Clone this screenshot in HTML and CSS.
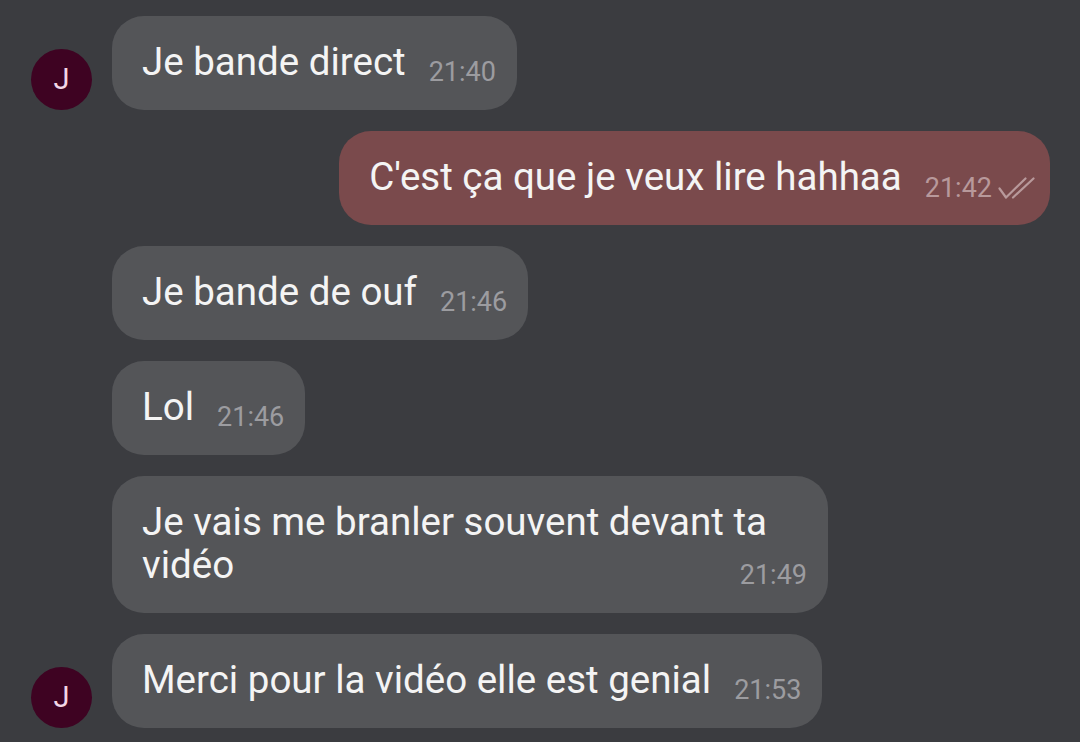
FILE: index.html
```html
<!DOCTYPE html>
<html lang="fr">
<head>
<meta charset="utf-8">
<title>Chat</title>
<link rel="stylesheet" href="styles.css">
</head>
<body>
<div class="chat">
  <div class="row in">
    <div class="avatar">J</div>
    <div class="bubble"><span class="meta">21:40</span><span class="text">Je bande direct</span></div>
  </div>
  <div class="row out">
    <div class="bubble"><span class="meta">21:42<svg class="ticks" viewBox="0 0 37 22" width="37" height="22"><path d="M1.5 11.5 L8 20.5 L27.5 1.5 M15 20.5 L35.5 1.5" fill="none" stroke="currentColor" stroke-width="2.2" stroke-linecap="round" stroke-linejoin="round"/></svg></span><span class="text">C'est ça que je veux lire hahhaa</span></div>
  </div>
  <div class="row in">
    <div class="spacer"></div>
    <div class="bubble"><span class="meta">21:46</span><span class="text">Je bande de ouf</span></div>
  </div>
  <div class="row in">
    <div class="spacer"></div>
    <div class="bubble"><span class="meta">21:46</span><span class="text">Lol</span></div>
  </div>
  <div class="row in">
    <div class="spacer"></div>
    <div class="bubble"><span class="text">Je vais me branler souvent devant ta vidéo</span><span class="meta">21:49</span></div>
  </div>
  <div class="row in">
    <div class="avatar">J</div>
    <div class="bubble"><span class="meta">21:53</span><span class="text">Merci pour la vidéo elle est genial</span></div>
  </div>
</div>
</body>
</html>
```

FILE: styles.css
```css
html, body {
  margin: 0;
  padding: 0;
  background: #3b3c40;
  height: 100%;
  overflow: hidden;
}

body {
  font-family: Roboto, "Noto Sans", sans-serif;
  color: #f4f4f4;
}

.chat {
  display: flex;
  flex-direction: column;
  gap: 21px;
  padding: 16px 30px 0 31px;
}

.row {
  display: flex;
  align-items: flex-end;
  gap: 20px;
}

.row.out {
  justify-content: flex-end;
}

.avatar,
.spacer {
  flex: 0 0 61px;
  width: 61px;
  height: 61px;
}

.avatar {
  border-radius: 50%;
  background: #3e0322;
  color: #f3d6e6;
  font-size: 29px;
  line-height: 61px;
  text-align: center;
}

.bubble {
  box-sizing: border-box;
  display: flow-root;
  max-width: 716px;
  background: #545558;
  border-radius: 32px;
  padding: 24px 21px 27px 30px;
  font-size: 38.5px;
  line-height: 43px;
}

.out .bubble {
  max-width: 760px;
  background: #7a4a4c;
  padding-right: 15px;
}

.meta {
  float: right;
  margin: 22px 0 0 23px;
  font-size: 27px;
  line-height: 20px;
  color: #9c9ca0;
  display: flex;
  align-items: flex-end;
  gap: 6px;
}

.out .meta {
  color: #b8999b;
}

.ticks {
  display: block;
  margin-bottom: -1px;
}
```
